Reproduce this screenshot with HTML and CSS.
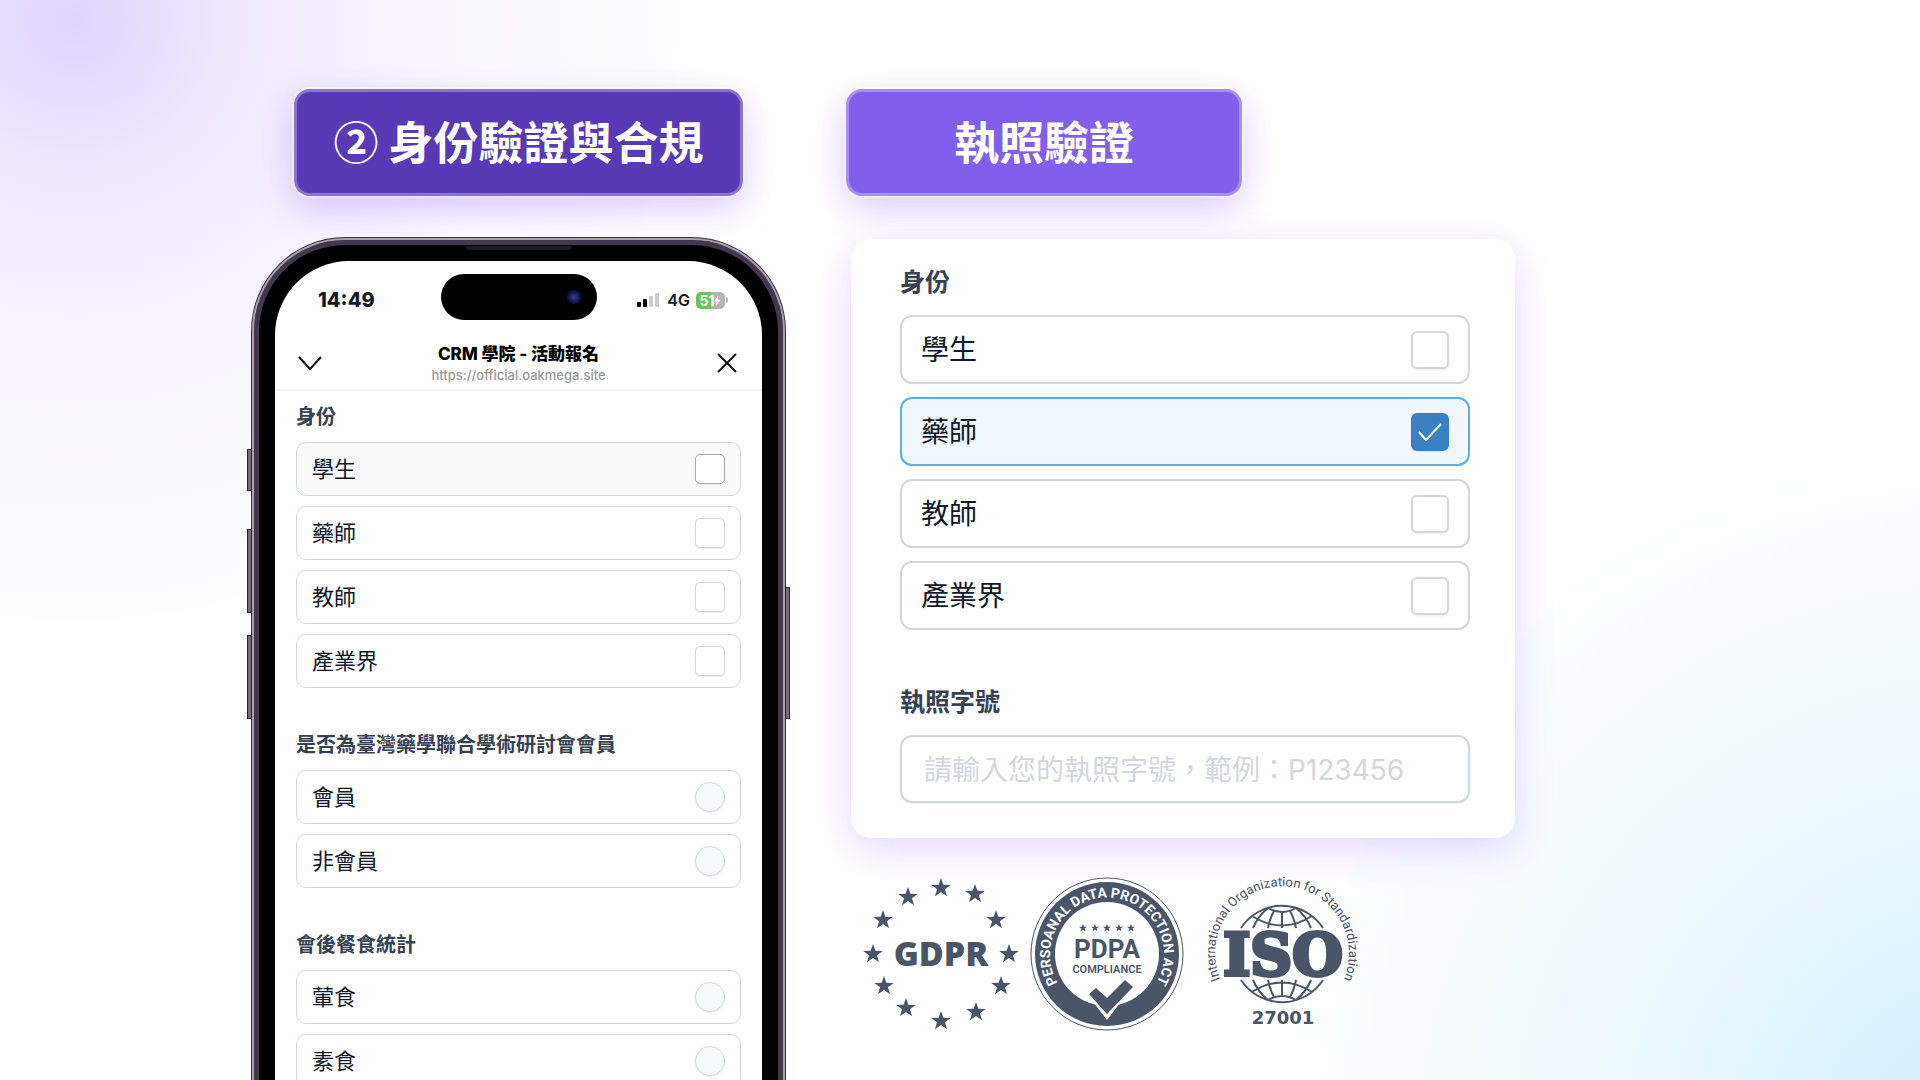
FILE: index.html
```html
<!DOCTYPE html>
<html lang="zh-Hant">
<head>
<meta charset="utf-8">
<meta name="viewport" content="width=device-width, initial-scale=1">
<title>身份驗證與合規</title>
<link rel="stylesheet" href="styles.css">
</head>
<body>
<main class="stage">
  <section class="column column-phone">
    <h1 class="banner banner-deep">② 身份驗證與合規</h1>
    <div class="phone">
      <span class="key key-action"></span>
      <span class="key key-up"></span>
      <span class="key key-down"></span>
      <span class="key key-power"></span>
      <div class="bezel">
        <span class="speaker"></span>
        <div class="screen">
          <div class="status">
            <span class="clock">14:49</span>
            <span class="island"><span class="lens"></span></span>
            <span class="status-icons">
              <svg class="signal" viewBox="0 0 24 16" aria-hidden="true">
                <rect x="0" y="10" width="4" height="5" rx="1"/>
                <rect x="6" y="7" width="4" height="8" rx="1"/>
                <rect class="off" x="12" y="4" width="4" height="11" rx="1"/>
                <rect class="off" x="18" y="1" width="4" height="14" rx="1"/>
              </svg>
              <span class="network">4G</span>
              <span class="battery">51<svg viewBox="0 0 8 12" aria-hidden="true"><path d="M5 0 0 7h3L2 12 8 5H4z"/></svg></span>
            </span>
          </div>
          <header class="appbar">
            <button class="icon-button" aria-label="收合"><svg viewBox="0 0 24 24"><path d="M1 6l11 12L23 6"/></svg></button>
            <div class="appbar-text">
              <strong class="appbar-title">CRM 學院 - 活動報名</strong>
              <span class="appbar-url">https://official.oakmega.site</span>
            </div>
            <button class="icon-button" aria-label="關閉"><svg viewBox="0 0 24 24"><path d="M3 3l18 18M21 3 3 21"/></svg></button>
          </header>
          <form class="form">
            <fieldset class="group">
              <legend class="legend">身份</legend>
              <label class="option option-hover">學生<input type="checkbox" class="tick"></label>
              <label class="option">藥師<input type="checkbox" class="tick"></label>
              <label class="option">教師<input type="checkbox" class="tick"></label>
              <label class="option">產業界<input type="checkbox" class="tick"></label>
            </fieldset>
            <fieldset class="group">
              <legend class="legend">是否為臺灣藥學聯合學術研討會會員</legend>
              <label class="option">會員<input type="radio" name="member" class="tick tick-round"></label>
              <label class="option">非會員<input type="radio" name="member" class="tick tick-round"></label>
            </fieldset>
            <fieldset class="group">
              <legend class="legend">會後餐食統計</legend>
              <label class="option">葷食<input type="radio" name="meal" class="tick tick-round"></label>
              <label class="option">素食<input type="radio" name="meal" class="tick tick-round"></label>
            </fieldset>
          </form>
        </div>
      </div>
    </div>
  </section>

  <section class="column column-license">
    <h2 class="banner banner-light">執照驗證</h2>
    <form class="card">
      <fieldset class="group">
        <legend class="legend">身份</legend>
        <label class="option">學生<input type="checkbox" class="tick"></label>
        <label class="option option-on">藥師<input type="checkbox" class="tick" checked></label>
        <label class="option">教師<input type="checkbox" class="tick"></label>
        <label class="option">產業界<input type="checkbox" class="tick"></label>
      </fieldset>
      <div class="group">
        <label class="legend" for="license">執照字號</label>
        <input class="field" id="license" type="text" placeholder="請輸入您的執照字號，範例：P123456">
      </div>
    </form>

    <div class="badges">
      <svg class="badge" viewBox="-80 -80 160 160" role="img" aria-label="GDPR">
        <defs><path id="star" d="M0-10 2.4-3.2 9.8-3.1 3.9 1.2 6.1 8.2 0 4-6.1 8.2-3.9 1.2-9.8-3.1-2.4-3.2z"/></defs>
        <use href="#star" x="0" y="-66"/><use href="#star" x="34" y="-60"/><use href="#star" x="55" y="-34"/>
        <use href="#star" x="68" y="0"/><use href="#star" x="60" y="32"/><use href="#star" x="35" y="58"/>
        <use href="#star" x="0" y="67"/><use href="#star" x="-35" y="54"/><use href="#star" x="-57" y="32"/>
        <use href="#star" x="-68" y="0"/><use href="#star" x="-58" y="-34"/><use href="#star" x="-33" y="-57"/>
        <text class="gdpr" x="0" y="12">GDPR</text>
      </svg>
      <svg class="badge" viewBox="-80 -80 160 160" role="img" aria-label="PDPA">
        <defs><path id="pdpa-arc" d="M-51 26A57 57 0 1 1 51 26"/></defs>
        <circle class="white" r="77"/>
        <circle class="line" r="76"/>
        <circle r="72"/>
        <circle class="white" r="52"/>
        <path class="white" d="M-24 44-13 49 0 66 13 49 24 44z"/>
        <path d="M-18 40-11 34 0 44 18 26 26 33 0 60z"/>
        <text class="ring"><textPath href="#pdpa-arc" startOffset="50%">PERSOANAL DATA PROTECTION ACT</textPath></text>
        <g transform="translate(0 -26)"><use href="#star" transform="translate(-24) scale(.42)"/><use href="#star" transform="translate(-12) scale(.42)"/><use href="#star" transform="scale(.42)"/><use href="#star" transform="translate(12) scale(.42)"/><use href="#star" transform="translate(24) scale(.42)"/></g>
        <text class="pdpa" x="0" y="4">PDPA</text>
        <text class="compliance" x="0" y="19">COMPLIANCE</text>
      </svg>
      <svg class="badge badge-iso" viewBox="-80 -80 160 160" role="img" aria-label="ISO 27001">
        <defs>
          <path id="iso-arc" d="M-59 31A67 67 0 1 1 59 31"/>
          <g id="cap">
            <path d="M-41-26A49 49 0 0 1 41-26M-14-46Q0-38 14-46M-30-38Q0-19 30-38M0-42V-26"/>
            <path d="M-8-43Q-12-36-14-26M8-43Q12-36 14-26M-14-46Q-24-38-29-26M14-46Q24-38 29-26"/>
          </g>
        </defs>
        <g class="globe"><use href="#cap"/><use href="#cap" transform="scale(1 -1)"/></g>
        <text class="arc"><textPath href="#iso-arc" startOffset="50%">International Organization for Standardization</textPath></text>
        <text class="iso" x="1" y="21">ISO</text>
        <text class="number" x="1" y="70">27001</text>
      </svg>
    </div>
  </section>
</main>
</body>
</html>
```
FILE: styles.css
```css
* { box-sizing: border-box; }

body {
  margin: 0;
  height: 100vh;
  overflow: hidden;
  font-family: Inter, "Noto Sans CJK TC", sans-serif;
  color: #111827;
  background:
    radial-gradient(circle 605px at 75px 20px, #e0d4fd 0, #eee7fc 25%, #f6f2fe 50%, #fbfaff 75%, #fdfdff 99%, transparent 100%),
    radial-gradient(circle 691px at calc(100% + 62px) calc(100% + 67px), #ccedfc 0, #dff3fd 30%, #f0f9fe 60%, #f9fdff 85%, #fcfeff 99%, transparent 100%),
    #fff;
}

.stage {
  display: flex;
  align-items: flex-start;
  gap: 60px;
  height: 100%;
  padding: 89px 0 0 251px;
}

.column {
  display: flex;
  flex-direction: column;
}

.column-phone {
  align-items: center;
  gap: 41px;
  width: 535px;
}

.column-license { width: 669px; }

.banner {
  margin: 0;
  height: 107px;
  border: 3px solid rgba(255, 255, 255, .3);
  border-radius: 16px;
  box-shadow: 0 0 0 2px rgba(255, 255, 255, .4), 0 12px 36px rgba(124, 58, 237, .28);
  color: #fff;
  font-family: "Noto Sans CJK TC", sans-serif;
  font-size: 45px;
  line-height: 97px;
  font-weight: 700;
  text-align: center;
}

.banner-deep { width: 449px; background: #5839b6; }
.banner-light { width: 396px; background: #815eec; }

/* Phone */

.phone {
  position: relative;
  width: 100%;
  padding: 1px;
  border-radius: 94px;
  background: #3c3445;
}

.bezel {
  position: relative;
  padding: 16px;
  border: 2px solid #a9a2a8;
  border-radius: 93px;
  background: #000;
  box-shadow: inset 0 0 0 5px #43384f;
}

.screen {
  padding: 13px 0 40px;
  border-radius: 74px;
  background: #fff;
  margin: 5px 5px 0;
}

.speaker {
  position: absolute;
  top: 6px;
  left: calc(50% - 53px);
  width: 106px;
  height: 4px;
  border-radius: 0 0 4px 4px;
  background: #1c1b1f;
}

.key {
  position: absolute;
  width: 5px;
  border: 1px solid #2b2533;
  background: #75697d;
}

.key-action { left: -4px; top: 212px; height: 42px; }
.key-up { left: -4px; top: 292px; height: 84px; }
.key-down { left: -4px; top: 398px; height: 84px; }
.key-power { right: -4px; top: 350px; height: 132px; }

.status {
  display: grid;
  grid-template-columns: 1fr 156px 1fr;
  align-items: center;
  height: 46px;
}

.clock {
  padding: 6px 0 0 43px;
  font-size: 20px;
  font-weight: 800;
}

.island {
  display: flex;
  align-items: center;
  justify-content: flex-end;
  height: 46px;
  padding-right: 16px;
  border-radius: 23px;
  background: #000;
}

.lens {
  width: 14px;
  height: 14px;
  border-radius: 50%;
  background: radial-gradient(circle, #3540a0 0, #17164e 50%, #0a0918 100%);
}

.status-icons {
  display: flex;
  align-items: center;
  justify-content: flex-end;
  gap: 6px;
  padding: 6px 37px 0 0;
}

.signal { width: 24px; height: 16px; }
.signal .off { fill: #ccc; }

.network { font-size: 16px; font-weight: 600; }

.battery {
  position: relative;
  display: flex;
  align-items: center;
  justify-content: center;
  width: 29px;
  height: 17px;
  border-radius: 5px;
  background: linear-gradient(90deg, #5fc75c 52%, #b4b4b4 52%);
  color: #fff;
  font-size: 14px;
  font-weight: 700;
}

.battery::after {
  content: "";
  position: absolute;
  right: -3px;
  width: 2px;
  height: 6px;
  border-radius: 0 2px 2px 0;
  background: #b4b4b4;
}

.battery svg { width: 7px; height: 11px; fill: #fff; }

.appbar {
  display: flex;
  align-items: center;
  justify-content: space-between;
  height: 71px;
  padding: 16px 22px 0;
  border-bottom: 2px solid #f2f2f3;
}

.icon-button {
  display: grid;
  place-items: center;
  width: 26px;
  height: 26px;
  padding: 0;
  border: 0;
  background: none;
}

.icon-button svg {
  width: 24px;
  height: 24px;
  fill: none;
  stroke: #111;
  stroke-width: 2;
}

.appbar-text {
  display: flex;
  flex-direction: column;
  align-items: center;
}

.appbar-title { color: #000; font-size: 17px; line-height: 24px; font-weight: 800; }
.appbar-url { color: #999; font-size: 13px; line-height: 18px; font-weight: 500; }

/* Forms */

.group {
  display: flex;
  flex-direction: column;
  min-width: 0;
  margin: 0;
  padding: 0;
  border: 0;
}

.legend {
  padding: 0;
  color: #374151;
  font-weight: 700;
}

.option {
  display: flex;
  align-items: center;
  justify-content: space-between;
  border: 1px solid #d3d7df;
  background: #fff;
}

.tick {
  appearance: none;
  margin: 0;
  border: 1px solid #d3d7df;
  background: #fff center / 100% no-repeat;
  box-shadow: 0 1px 2px rgba(0, 0, 0, .08);
}

.form { padding: 12px 21px; }
.form .group { gap: 10px; margin-bottom: 43px; }
.form .legend { margin-bottom: 11px; font-size: 20px; line-height: 28px; }
.form .option { height: 54px; padding: 0 15px; border-radius: 10px; font-size: 22px; line-height: 28px; }
.form .tick { width: 30px; height: 30px; border-radius: 5px; }
.form .tick-round { border-radius: 50%; background-color: #f9fafb; }
.form .option-hover { background: #fafafb; }
.form .option-hover .tick { border-color: #a3abb9; }

.card {
  width: 664px;
  margin: 43px 0 0 5px;
  padding: 25px 45px 35px 49px;
  border-radius: 20px;
  background: #fff;
  box-shadow: 0 12px 40px rgba(124, 58, 237, .2);
}

.card .group { gap: 13px; }
.card .group + .group { gap: 15px; margin-top: 54px; }
.card .legend { font-size: 25px; line-height: 36px; }
.card legend.legend { margin-bottom: 15px; }
.card .option { height: 69px; padding: 0 19px; border-width: 2px; border-radius: 12px; font-size: 28px; line-height: 36px; }
.card .tick { width: 38px; height: 38px; border-width: 2px; border-radius: 6px; }
.card .option-on { border-color: #5aaeea; background: #f1f7fe; }

.card .tick:checked {
  border-color: #3a81c3;
  background-color: #3a81c3;
  background-image: url("data:image/svg+xml,%3Csvg xmlns='http://www.w3.org/2000/svg' viewBox='0 0 34 34'%3E%3Cpath d='M6 17l7 8L28 9' fill='none' stroke='%23fff' stroke-width='2'/%3E%3C/svg%3E");
}

.field {
  height: 68px;
  padding: 2px 22px 0;
  border: 2px solid #d3d7df;
  border-radius: 12px;
  background: #fff;
  box-shadow: 0 1px 3px rgba(0, 0, 0, .06);
  font: inherit;
  font-size: 28px;
}

.field::placeholder { color: #d3d7df; opacity: 1; }

/* Compliance marks */

.badges {
  display: flex;
  gap: 6px;
  margin: 36px 0 0 15px;
}

.badge { width: 160px; height: 160px; overflow: visible; fill: #4a5568; }
.badge-iso { margin-left: 9px; }
.badge text { text-anchor: middle; }
.badge .white { fill: #fff; }
.badge .line { fill: none; stroke: #4a5568; stroke-width: 1; }
.gdpr { font: 800 34px "Open Sans", sans-serif; }
.ring { fill: #fff; font: 700 14px Roboto, sans-serif; }
.pdpa { font: 700 26px Roboto, sans-serif; }
.compliance { font: 600 11px Roboto, sans-serif; }
.arc { font: 400 13px Roboto, sans-serif; }
.globe { fill: none; stroke: #4a5568; stroke-width: 2; }
.iso { font: 700 58px "DejaVu Serif", serif; stroke: #4a5568; stroke-width: 4; }
.number { font: 700 18px "DejaVu Sans", sans-serif; }
```
